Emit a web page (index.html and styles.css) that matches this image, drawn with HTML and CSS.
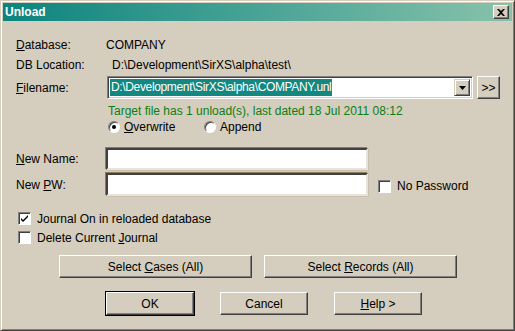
FILE: index.html
```html
<!DOCTYPE html>
<html lang="en">
<head>
  <meta charset="UTF-8" />
  <title>Unload</title>
  <link rel="stylesheet" href="styles.css">
</head>
<body>
  <div class="window">
    <div class="titlebar">
      <span class="title">Unload</span>
      <button class="close-btn" aria-label="Close">
        <svg width="8" height="7" viewBox="0 0 8 7"><path d="M0 0h2l2 2 2-2h2L5 3.5 8 7H6L4 5 2 7H0l3-3.5z" fill="#000"/></svg>
      </button>
    </div>

    <div class="content">
      <div class="row db-row">
        <div class="label"><u>D</u>atabase:</div>
        <div class="value">COMPANY</div>
      </div>
      <div class="row loc-row">
        <div class="label">DB Location:</div>
        <div class="value path">D:\Development\SirXS\alpha\test\</div>
      </div>
      <div class="row file-row">
        <div class="label"><u>F</u>ilename:</div>
        <div class="combo">
          <div class="combo-text"><span class="sel">D:\Development\SirXS\alpha\COMPANY.unl</span></div>
          <div class="combo-btn">
            <svg width="7" height="4" viewBox="0 0 7 4"><path d="M0 0h7L3.5 4z" fill="#000"/></svg>
          </div>
        </div>
        <button class="btn more-btn">&gt;&gt;</button>
      </div>
      <div class="row status-row">
        <div class="label"></div>
        <div class="status">Target file has 1 unload(s), last dated 18 Jul 2011 08:12</div>
      </div>
      <div class="row radio-row">
        <div class="label"></div>
        <label class="radio"><span class="dot on"></span><span><u>O</u>verwrite</span></label>
        <label class="radio"><span class="dot"></span><span>Append</span></label>
      </div>

      <div class="row name-row">
        <div class="label"><u>N</u>ew Name:</div>
        <div class="field"></div>
      </div>
      <div class="row pw-row">
        <div class="label">New <u>P</u>W:</div>
        <div class="field"></div>
        <label class="check nopw"><span class="box"></span><span>No Password</span></label>
      </div>

      <div class="journal">
        <label class="check">
          <span class="box">
            <svg width="7" height="7" viewBox="0 0 7 7"><path d="M0 3l2 2 5-5v2L2 7 0 5z" fill="#000"/></svg>
          </span><span>Journal On in reloaded database</span>
        </label>
        <label class="check"><span class="box"></span><span>Delete Current <u>J</u>ournal</span></label>
      </div>

      <div class="select-row">
        <button class="btn wide">Select <u>C</u>ases (All)</button>
        <button class="btn wide">Select <u>R</u>ecords (All)</button>
      </div>

      <div class="action-row">
        <button class="btn action default">OK</button>
        <button class="btn action">Cancel</button>
        <button class="btn action"><u>H</u>elp &gt;</button>
      </div>
    </div>
  </div>
</body>
</html>
```

FILE: styles.css
```css
body {
  margin: 0;
  padding: 0;
  font-family: 'Liberation Sans', Arial, sans-serif;
  font-size: 12px;
  color: #000;
  background-color: #d5cdbd;
}
.window {
  width: 515px;
  height: 331px;
  box-sizing: border-box;
  background-color: #d5cdbd;
  border-top: 1px solid #d5cdbd;
  border-left: 1px solid #d5cdbd;
  border-right: 1px solid #404040;
  border-bottom: 1px solid #404040;
  padding: 2px;
  box-shadow: inset 1px 1px 0 #fff, inset -1px -1px 0 #808080;
}
.titlebar {
  height: 18px;
  display: flex;
  align-items: center;
  justify-content: space-between;
  padding: 0 3px 0 2px;
  background: linear-gradient(to right, #0c847e, #4fa698 55%, #88c2aa);
}
.title {
  color: #fff;
  font-weight: bold;
  font-size: 12px;
}
.close-btn {
  width: 16px;
  height: 14px;
  padding: 0;
  display: flex;
  align-items: center;
  justify-content: center;
  background-color: #d5cdbd;
  border: 1px solid;
  border-color: #fff #404040 #404040 #fff;
  box-shadow: inset -1px -1px 0 #808080;
}
.content {
  padding: 0 0 0 13px;
}
.row {
  display: flex;
  align-items: center;
  height: 14px;
}
.label {
  width: 90px;
  flex-shrink: 0;
}
.db-row {
  margin-top: 17px;
}
.loc-row {
  margin-top: 6px;
}
.value.path {
  padding-left: 6px;
}
.file-row {
  margin-top: 4px;
  height: 23px;
}
.combo {
  width: 366px;
  height: 23px;
  box-sizing: border-box;
  display: flex;
  background: #fff;
  border: 1px solid;
  border-color: #808080 #fff #fff #808080;
  box-shadow: inset 1px 1px 0 #404040, inset -1px -1px 0 #d5cdbd;
  padding: 2px;
  margin-left: 1px;
}
.combo-text {
  flex: 1;
  display: flex;
  align-items: center;
}
.sel {
  background-color: #138780;
  color: #fff;
  line-height: 17px;
  padding: 0 1px;
  letter-spacing: -0.35px;
}
.combo-btn {
  width: 16px;
  box-sizing: border-box;
  display: flex;
  align-items: center;
  justify-content: center;
  background-color: #d5cdbd;
  border: 1px solid;
  border-color: #d5cdbd #404040 #404040 #d5cdbd;
  box-shadow: inset 1px 1px 0 #fff, inset -1px -1px 0 #808080;
}
.btn {
  font-family: 'Liberation Sans', Arial, sans-serif;
  font-size: 12px;
  color: #000;
  background-color: #d5cdbd;
  border: 1px solid;
  border-color: #fff #404040 #404040 #fff;
  box-shadow: inset -1px -1px 0 #808080;
  padding: 0;
}
.more-btn {
  width: 23px;
  height: 23px;
  margin-left: 4px;
}
.status-row {
  margin-top: 5px;
}
.status {
  color: #0b7f12;
  padding-left: 2px;
}
.radio-row {
  margin-top: 2px;
}
.radio {
  display: flex;
  align-items: center;
  gap: 4px;
  width: 94px;
  padding-left: 2px;
}
.dot {
  width: 12px;
  height: 12px;
  box-sizing: border-box;
  border-radius: 50%;
  background: #fff;
  border: 1px solid;
  border-color: #808080 #fff #fff #808080;
  box-shadow: inset 1px 1px 0 #404040;
  display: flex;
  align-items: center;
  justify-content: center;
}
.dot.on::after {
  content: "";
  width: 4px;
  height: 4px;
  border-radius: 50%;
  background: #000;
}
.name-row {
  margin-top: 14px;
  height: 22px;
}
.pw-row {
  margin-top: 3px;
  height: 23px;
}
.field {
  width: 262px;
  height: 100%;
  box-sizing: border-box;
  background: #fff;
  border: 2px solid;
  border-color: #404040 #e8e4dc #e8e4dc #404040;
  box-shadow: -1px -1px 0 #8c7c5c, 1px 1px 0 #c8c0b0;
}
.check {
  display: flex;
  align-items: center;
  gap: 6px;
  height: 13px;
}
.nopw {
  margin-left: 10px;
  margin-top: 3px;
}
.box {
  width: 13px;
  height: 13px;
  box-sizing: border-box;
  background: #fff;
  border: 1px solid;
  border-color: #808080 #fff #fff #808080;
  box-shadow: inset 1px 1px 0 #404040;
  display: flex;
  align-items: center;
  justify-content: center;
}
.journal {
  display: flex;
  flex-direction: column;
  gap: 6px;
  margin-top: 16px;
  margin-left: 2px;
}
.select-row {
  display: flex;
  gap: 12px;
  margin-top: 11px;
  margin-left: 43px;
}
.wide {
  width: 193px;
  height: 23px;
}
.action-row {
  display: flex;
  gap: 26px;
  margin-top: 14px;
  margin-left: 90px;
}
.action {
  width: 88px;
  height: 23px;
}
.action.default {
  outline: 1px solid #000;
}
```
